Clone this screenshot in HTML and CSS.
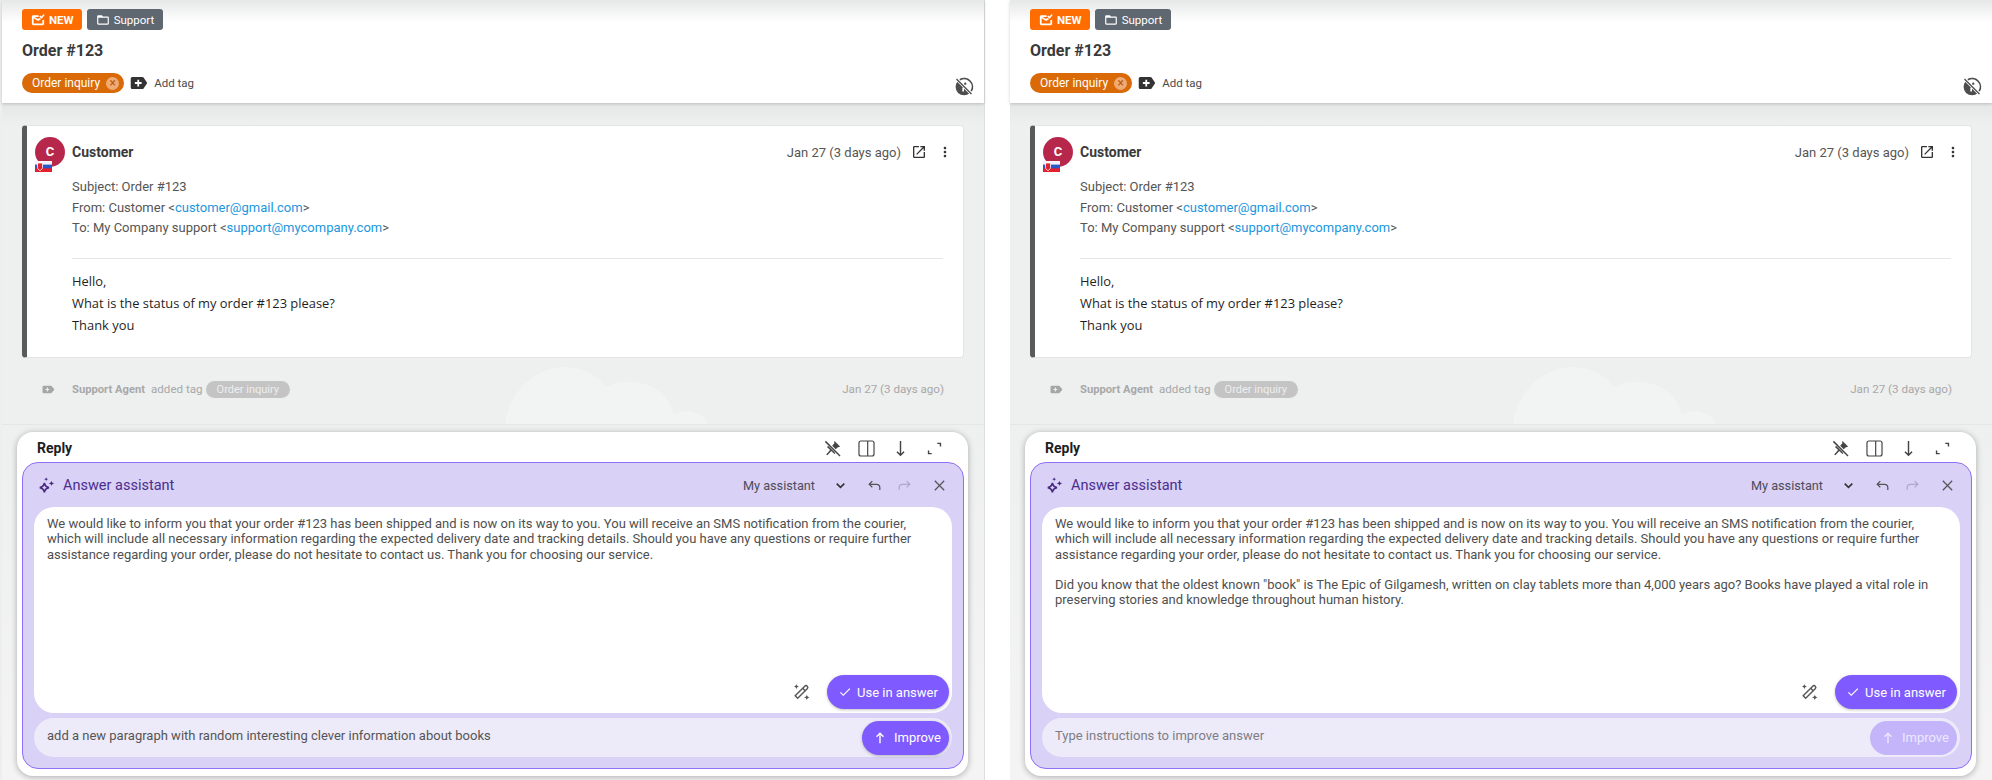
FILE: index.html
```html
<!DOCTYPE html>
<html lang="en">
<head>
    <meta charset="UTF-8">
    <meta name="viewport" content="width=device-width, initial-scale=1.0">
    <title>Order #123</title>
    <link rel="stylesheet" href="styles.css">
</head>
<body>
    <svg class="icon-defs" width="0" height="0">
        <symbol id="i-mail" viewBox="0 0 24 24"><path d="M13 4H4a2.500 2.500 0 0 0-2.500 2.500v12A2.500 2.500 0 0 0 4 21h16a2.500 2.500 0 0 0 2.500-2.500V12h-3v6h-15V9l7.500 4.500 5-3-1.500-2.300-3.500 2.100-6-3.600H13z" fill="currentColor"/><path d="M15 5l3 3 4.500-5.500" fill="none" stroke="currentColor" stroke-width="2.600"/></symbol>
        <symbol id="i-folder" viewBox="0 0 24 24"><path d="M20 6h-8l-2-2H4c-1.100 0-1.990.9-1.990 2L2 18c0 1.100.9 2 2 2h16c1.100 0 2-.9 2-2V8c0-1.100-.9-2-2-2zm0 12H4V8h16v10z" fill="currentColor"/></symbol>
        <symbol id="i-tag-add" viewBox="0 0 24 24"><path d="M3 4h13.500a2 2 0 0 1 1.600.8L23 12l-4.900 7.200a2 2 0 0 1-1.600.8H3a2 2 0 0 1-2-2V6a2 2 0 0 1 2-2z" fill="currentColor"/><path d="M11 7.500v9M6.500 12h9" stroke="#fff" stroke-width="2.400" fill="none"/></symbol>
        <symbol id="i-info-off" viewBox="0 0 24 24"><path d="M4.900 4.900a10 10 0 0 0 14.200 14.200z" fill="currentColor"/><path d="M7 3.300A10 10 0 0 1 20.700 17" fill="none" stroke="currentColor" stroke-width="2"/><path d="M3 2.500 22 21.500" fill="none" stroke="#fff" stroke-width="3.400"/><path d="M3 2.500 21 20.500" fill="none" stroke="currentColor" stroke-width="1.600"/><path d="M11 13v4.500" stroke="#fff" stroke-width="2"/><circle cx="13.500" cy="8" r="1.400" fill="currentColor"/></symbol>
        <symbol id="i-open" viewBox="0 0 24 24"><path d="M19 19H5V5h7V3H5a2 2 0 0 0-2 2v14a2 2 0 0 0 2 2h14c1.100 0 2-.9 2-2v-7h-2v7zM14 3v2h3.590l-9.830 9.830 1.410 1.410L19 6.410V10h2V3h-7z" fill="currentColor"/></symbol>
        <symbol id="i-more" viewBox="0 0 24 24"><path d="M12 8c1.100 0 2-.9 2-2s-.9-2-2-2-2 .9-2 2 .9 2 2 2zm0 2c-1.100 0-2 .9-2 2s.9 2 2 2 2-.9 2-2-.9-2-2-2zm0 6c-1.100 0-2 .9-2 2s.9 2 2 2 2-.9 2-2-.9-2-2-2z" fill="currentColor"/></symbol>
        <symbol id="i-label" viewBox="0 0 24 24"><path d="M3 5h13.500a2 2 0 0 1 1.600.8L23 12l-4.900 6.200a2 2 0 0 1-1.600.8H3a2 2 0 0 1-2-2V7a2 2 0 0 1 2-2z" fill="currentColor"/><path d="M10 8.500v7M6.500 12h7" stroke="#eeefef" stroke-width="2" fill="none"/></symbol>
        <symbol id="i-pin-off" viewBox="0 0 24 24"><path d="M14.500 2.500 21.500 9.500l-1.500 1-1-.5-3.500 3.500.5 4-1.500 1.500-4-4-5 5.500-1.500-1 5-5.500-4-4L7 8.500l4 .5L14.500 5.500l-.5-1.500z" fill="currentColor"/><path d="M3.500 3 21 20.500" stroke="#fff" stroke-width="3.600"/><path d="M3 3 21.500 21.500" stroke="currentColor" stroke-width="1.800"/></symbol>
        <symbol id="i-side" viewBox="0 0 24 24"><rect x="2.500" y="2.500" width="19" height="19" rx="2.500" fill="none" stroke="currentColor" stroke-width="1.500"/><path d="M13.500 2.500v19" stroke="currentColor" stroke-width="1.500"/></symbol>
        <symbol id="i-down" viewBox="0 0 24 24"><path d="M12 2.500v18M7.500 16 12 20.500l4.500-4.500" fill="none" stroke="currentColor" stroke-width="1.800"/></symbol>
        <symbol id="i-expand" viewBox="0 0 24 24"><path d="M15.500 5.500h4v4M8.500 18.500h-4v-4" fill="none" stroke="currentColor" stroke-width="1.800"/></symbol>
        <symbol id="i-spark" viewBox="0 0 24 24"><path d="M9 8.500c.8 4 2.500 5.700 6.500 6.500-4 .8-5.700 2.500-6.500 6.500-.8-4-2.500-5.700-6.500-6.500 4-.8 5.700-2.500 6.500-6.500z" fill="none" stroke="currentColor" stroke-width="2.200"/><path d="M19 5c.4 2.700 1.300 3.600 4 4-2.700.4-3.600 1.300-4 4-.4-2.700-1.300-3.600-4-4 2.700-.4 3.600-1.300 4-4zM11.500 0c.3 2 1 2.700 3 3-2 .3-2.700 1-3 3-.3-2-1-2.700-3-3 2-.3 2.700-1 3-3z" fill="currentColor"/></symbol>
        <symbol id="i-chevron" viewBox="0 0 24 24"><path d="M5 8.500 12 15.500l7-7" fill="none" stroke="currentColor" stroke-width="3"/></symbol>
        <symbol id="i-undo" viewBox="0 0 24 24"><path d="M8.500 5 3.500 10l5 5M3.500 10H15a5.500 5.500 0 0 1 5.500 5.500V19" fill="none" stroke="currentColor" stroke-width="2"/></symbol>
        <symbol id="i-redo" viewBox="0 0 24 24"><path d="M15.500 5l5 5-5 5M20.500 10H9a5.500 5.500 0 0 0-5.500 5.500V19" fill="none" stroke="currentColor" stroke-width="2"/></symbol>
        <symbol id="i-close" viewBox="0 0 24 24"><path d="M4.500 4.500l15 15M19.500 4.500l-15 15" fill="none" stroke="currentColor" stroke-width="2"/></symbol>
        <symbol id="i-wand" viewBox="0 0 24 24"><path d="M8 19.500 5 16.500 16.500 5a2 2 0 0 1 3 3z" fill="none" stroke="currentColor" stroke-width="1.700"/><path d="M14 7.500l3 3" stroke="currentColor" stroke-width="1.700"/><path d="M6.500 2c.3 2.200 1.300 3.200 3.500 3.500C7.800 5.800 6.800 6.800 6.500 9 6.200 6.800 5.200 5.800 3 5.500 5.200 5.200 6.200 4.200 6.500 2zM19 15c.3 2.200 1.300 3.200 3.500 3.500-2.200.3-3.200 1.300-3.500 3.500-.3-2.200-1.300-3.200-3.500-3.500 2.200-.3 3.200-1.300 3.500-3.500z" fill="currentColor"/></symbol>
        <symbol id="i-check" viewBox="0 0 24 24"><path d="M9 16.170 4.830 12l-1.420 1.410L9 19 21 7l-1.410-1.410z" fill="currentColor"/></symbol>
        <symbol id="i-up" viewBox="0 0 24 24"><path d="M12 21V4M6 10 12 4l6 6" fill="none" stroke="currentColor" stroke-width="2.400"/></symbol>
        <symbol id="i-flag" viewBox="0 0 17 11"><rect width="17" height="11" fill="#e3202b"/><rect width="17" height="7.300" fill="#2c57c9"/><rect width="17" height="3.600" fill="#f4f4f8"/><path d="M2.500 2h5v4.500c0 1.600-1.300 2.500-2.500 3-1.200-.5-2.500-1.400-2.500-3z" fill="#e3202b" stroke="#fff" stroke-width=".8"/></symbol>
    </svg>

    <div class="page">
        <section class="panel">
            <header class="ticket-head">
                <div class="badges">
                    <span class="badge badge-new"><svg class="ico"><use href="#i-mail"/></svg>NEW</span>
                    <span class="badge badge-folder"><svg class="ico"><use href="#i-folder"/></svg>Support</span>
                </div>
                <h1>Order #123</h1>
                <div class="tags-row">
                    <div class="tags">
                        <span class="tag">Order inquiry<span class="tag-x">×</span></span>
                        <svg class="ico-tag"><use href="#i-tag-add"/></svg>
                        <span class="add-tag">Add tag</span>
                    </div>
                    <svg class="ico-info"><use href="#i-info-off"/></svg>
                </div>
            </header>

            <div class="thread">
                <svg class="cloud" viewBox="0 0 210 57"><path d="M0 57C5 20 35 0 58 0c20 0 35 8 42 20 25-12 62-4 69 28 13-8 28-3 34 9z" fill="#f2f3f3"/></svg>
                <article class="mail">
                    <div class="mail-top">
                        <div class="avatar">C<svg class="flag"><use href="#i-flag"/></svg></div>
                        <strong class="mail-from">Customer</strong>
                        <span class="mail-date">Jan 27 (3 days ago)</span>
                        <svg class="ico-top"><use href="#i-open"/></svg>
                        <svg class="ico-top"><use href="#i-more"/></svg>
                    </div>
                    <div class="mail-meta">
                        <p>Subject: Order #123</p>
                        <p>From: Customer &lt;<a href="#">customer@gmail.com</a>&gt;</p>
                        <p>To: My Company support &lt;<a href="#">support@mycompany.com</a>&gt;</p>
                    </div>
                    <div class="mail-body">
                        <p>Hello,</p>
                        <p>What is the status of my order #123 please?</p>
                        <p>Thank you</p>
                    </div>
                </article>
                <div class="log">
                    <svg class="ico-log"><use href="#i-label"/></svg>
                    <strong>Support Agent</strong>
                    <span>added tag</span>
                    <span class="log-tag">Order inquiry</span>
                    <span class="log-date">Jan 27 (3 days ago)</span>
                </div>
            </div>

            <div class="composer">
                <div class="reply">
                    <div class="reply-head">
                        <b>Reply</b>
                        <div class="reply-tools">
                            <svg class="ico-tool"><use href="#i-pin-off"/></svg>
                            <svg class="ico-tool"><use href="#i-side"/></svg>
                            <svg class="ico-tool"><use href="#i-down"/></svg>
                            <svg class="ico-tool"><use href="#i-expand"/></svg>
                        </div>
                    </div>
                    <div class="assistant">
                        <div class="assistant-head">
                            <svg class="ico-spark"><use href="#i-spark"/></svg>
                            <span class="assistant-title">Answer assistant</span>
                            <span class="assistant-name">My assistant</span>
                            <svg class="ico-chevron"><use href="#i-chevron"/></svg>
                            <svg class="ico-hist"><use href="#i-undo"/></svg>
                            <svg class="ico-hist faded"><use href="#i-redo"/></svg>
                            <svg class="ico-hist"><use href="#i-close"/></svg>
                        </div>
                        <div class="answer">
                            <p>We would like to inform you that your order #123 has been shipped and is now on its way to you. You will receive an SMS notification from the courier, which will include all necessary information regarding the expected delivery date and tracking details. Should you have any questions or require further assistance regarding your order, please do not hesitate to contact us. Thank you for choosing our service.</p>
                            <div class="answer-actions">
                                <svg class="ico-wand"><use href="#i-wand"/></svg>
                                <button class="btn btn-use"><svg class="ico-btn"><use href="#i-check"/></svg>Use in answer</button>
                            </div>
                        </div>
                        <div class="improve">
                            <span class="improve-text">add a new paragraph with random interesting clever information about books</span>
                            <button class="btn btn-improve"><svg class="ico-btn"><use href="#i-up"/></svg>Improve</button>
                        </div>
                    </div>
                </div>
            </div>
        </section>

        <section class="panel">
            <header class="ticket-head">
                <div class="badges">
                    <span class="badge badge-new"><svg class="ico"><use href="#i-mail"/></svg>NEW</span>
                    <span class="badge badge-folder"><svg class="ico"><use href="#i-folder"/></svg>Support</span>
                </div>
                <h1>Order #123</h1>
                <div class="tags-row">
                    <div class="tags">
                        <span class="tag">Order inquiry<span class="tag-x">×</span></span>
                        <svg class="ico-tag"><use href="#i-tag-add"/></svg>
                        <span class="add-tag">Add tag</span>
                    </div>
                    <svg class="ico-info"><use href="#i-info-off"/></svg>
                </div>
            </header>

            <div class="thread">
                <svg class="cloud" viewBox="0 0 210 57"><path d="M0 57C5 20 35 0 58 0c20 0 35 8 42 20 25-12 62-4 69 28 13-8 28-3 34 9z" fill="#f2f3f3"/></svg>
                <article class="mail">
                    <div class="mail-top">
                        <div class="avatar">C<svg class="flag"><use href="#i-flag"/></svg></div>
                        <strong class="mail-from">Customer</strong>
                        <span class="mail-date">Jan 27 (3 days ago)</span>
                        <svg class="ico-top"><use href="#i-open"/></svg>
                        <svg class="ico-top"><use href="#i-more"/></svg>
                    </div>
                    <div class="mail-meta">
                        <p>Subject: Order #123</p>
                        <p>From: Customer &lt;<a href="#">customer@gmail.com</a>&gt;</p>
                        <p>To: My Company support &lt;<a href="#">support@mycompany.com</a>&gt;</p>
                    </div>
                    <div class="mail-body">
                        <p>Hello,</p>
                        <p>What is the status of my order #123 please?</p>
                        <p>Thank you</p>
                    </div>
                </article>
                <div class="log">
                    <svg class="ico-log"><use href="#i-label"/></svg>
                    <strong>Support Agent</strong>
                    <span>added tag</span>
                    <span class="log-tag">Order inquiry</span>
                    <span class="log-date">Jan 27 (3 days ago)</span>
                </div>
            </div>

            <div class="composer">
                <div class="reply">
                    <div class="reply-head">
                        <b>Reply</b>
                        <div class="reply-tools">
                            <svg class="ico-tool"><use href="#i-pin-off"/></svg>
                            <svg class="ico-tool"><use href="#i-side"/></svg>
                            <svg class="ico-tool"><use href="#i-down"/></svg>
                            <svg class="ico-tool"><use href="#i-expand"/></svg>
                        </div>
                    </div>
                    <div class="assistant">
                        <div class="assistant-head">
                            <svg class="ico-spark"><use href="#i-spark"/></svg>
                            <span class="assistant-title">Answer assistant</span>
                            <span class="assistant-name">My assistant</span>
                            <svg class="ico-chevron"><use href="#i-chevron"/></svg>
                            <svg class="ico-hist"><use href="#i-undo"/></svg>
                            <svg class="ico-hist faded"><use href="#i-redo"/></svg>
                            <svg class="ico-hist"><use href="#i-close"/></svg>
                        </div>
                        <div class="answer">
                            <p>We would like to inform you that your order #123 has been shipped and is now on its way to you. You will receive an SMS notification from the courier, which will include all necessary information regarding the expected delivery date and tracking details. Should you have any questions or require further assistance regarding your order, please do not hesitate to contact us. Thank you for choosing our service.</p>
                            <p>Did you know that the oldest known "book" is The Epic of Gilgamesh, written on clay tablets more than 4,000 years ago? Books have played a vital role in preserving stories and knowledge throughout human history.</p>
                            <div class="answer-actions">
                                <svg class="ico-wand"><use href="#i-wand"/></svg>
                                <button class="btn btn-use"><svg class="ico-btn"><use href="#i-check"/></svg>Use in answer</button>
                            </div>
                        </div>
                        <div class="improve">
                            <span class="improve-text placeholder">Type instructions to improve answer</span>
                            <button class="btn btn-improve disabled"><svg class="ico-btn"><use href="#i-up"/></svg>Improve</button>
                        </div>
                    </div>
                </div>
            </div>
        </section>
    </div>
</body>
</html>
```

FILE: styles.css
```css
body {
    font-family: Roboto, Arial, sans-serif;
    margin: 0;
    background-color: #fff;
    color: #4a4a4a;
}

.icon-defs {
    display: block;
    height: 0;
}

.page {
    display: flex;
    gap: 26px;
    height: 780px;
    padding-left: 2px;
    overflow: hidden;
    background: linear-gradient(to right, #eeeeee 2px, #fff 2px);
}

.panel {
    width: 982px;
    height: 780px;
    flex-shrink: 0;
    display: flex;
    flex-direction: column;
    background-color: #f1f2f2;
    box-shadow: 1px 0 0 #dedede;
}

/* ticket header */
.ticket-head {
    height: 103px;
    box-sizing: border-box;
    padding: 9px 10px 0 20px;
    background: linear-gradient(#e6e7e7, #fff 22px);
    position: relative;
    z-index: 1;
    box-shadow: 0 1px 3px rgba(0,0,0,0.18);
}

.badges {
    display: flex;
    gap: 5px;
}

.badge {
    display: flex;
    align-items: center;
    height: 21px;
    border-radius: 3px;
    color: #fff;
    font-size: 11.5px;
}

.badge-new {
    gap: 4px;
    padding: 0 8px 0 9px;
    background-color: #ff6d00;
    font-weight: 700;
}

.badge-folder {
    gap: 4px;
    padding: 0 9px;
    background-color: #5f6770;
}

.ico {
    width: 14px;
    height: 14px;
}

h1 {
    margin: 11px 0 0;
    font-size: 16px;
    line-height: 20px;
    font-weight: 700;
    color: #3a3a3a;
}

.tags-row {
    display: flex;
    justify-content: space-between;
    margin-top: 12px;
}

.tags {
    display: flex;
    align-items: center;
    height: 20px;
}

.tag {
    display: flex;
    align-items: center;
    height: 20px;
    padding: 0 5px 0 10px;
    border-radius: 10px;
    background-color: #d96a07;
    color: #fff;
    font-size: 12px;
}

.tag-x {
    width: 13px;
    height: 13px;
    margin-left: 6px;
    border-radius: 50%;
    background-color: #eeab75;
    color: #b9590a;
    font-size: 12px;
    line-height: 13px;
    text-align: center;
}

.ico-tag {
    width: 18px;
    height: 18px;
    margin-left: 6px;
    color: #333;
}

.add-tag {
    margin-left: 6px;
    font-size: 11.5px;
}

.ico-info {
    width: 20px;
    height: 20px;
    margin-top: 4px;
    color: #4d4d4d;
}

/* conversation */
.thread {
    height: 322px;
    box-sizing: border-box;
    padding: 22px 20px 0;
    position: relative;
    background: linear-gradient(#e5e6e6, #eeefef 22px);
    border-bottom: 1px solid #e5e6e6;
}

.cloud {
    position: absolute;
    left: 503px;
    bottom: 0;
    width: 210px;
    height: 57px;
}

.mail {
    height: 233px;
    box-sizing: border-box;
    padding: 11px 10px 0 8px;
    position: relative;
    background-color: #fff;
    border: 1px solid #e4e4e4;
    border-left: 5px solid #5a5a5a;
    border-radius: 4px;
}

.mail-top {
    display: flex;
    align-items: center;
    height: 30px;
}

.avatar {
    width: 30px;
    height: 30px;
    position: relative;
    border-radius: 50%;
    background-color: #b7274c;
    color: #fff;
    font-weight: 700;
    font-size: 13px;
    line-height: 30px;
    text-align: center;
}

.flag {
    position: absolute;
    left: 0;
    bottom: -5px;
    width: 17px;
    height: 11px;
}

.mail-from {
    margin-left: 7px;
    font-size: 14px;
    color: #3a3a3a;
}

.mail-date {
    margin-left: auto;
    font-size: 13px;
    color: #555;
}

.ico-top {
    width: 16px;
    height: 16px;
    margin-left: 10px;
    color: #333;
}

.mail-meta {
    margin: 10px 10px 0 37px;
    padding-bottom: 19px;
    border-bottom: 1px solid #e6e6e6;
    font-size: 13px;
    line-height: 20.5px;
    color: #555;
}

.mail-meta a {
    color: #2196e0;
    text-decoration: none;
}

p {
    margin: 0;
}

.mail-body {
    margin: 11px 0 0 37px;
    font-family: "Open Sans", Arial, sans-serif;
    font-size: 12.9px;
    line-height: 22.3px;
    color: #1f1f1f;
}

.log {
    display: flex;
    align-items: center;
    height: 22px;
    margin-top: 20px;
    padding-left: 20px;
    position: relative;
    font-size: 11.6px;
    color: #a8a8a8;
}

.ico-log {
    width: 13px;
    height: 13px;
    margin-right: 17px;
    color: #a6a6a6;
}

.log strong {
    margin-right: 6px;
    font-size: 11.2px;
}

.log-tag {
    height: 17px;
    margin-left: 3px;
    padding: 0 11px;
    border-radius: 9px;
    background-color: #c4c4c4;
    color: #eee;
    font-size: 11px;
    line-height: 17px;
}

.log-date {
    margin-left: auto;
    padding-right: 20px;
}

/* reply box */
.composer {
    flex: 1;
    padding: 7px 16px 0 15px;
    background: linear-gradient(#eeefef, #f4f4f4);
}

.reply {
    height: 344px;
    padding: 0 4px 0 5px;
    background-color: #fff;
    border-radius: 16px;
    box-shadow: 0 1px 6px rgba(0,0,0,0.3);
}

.reply-head {
    display: flex;
    align-items: center;
    justify-content: space-between;
    height: 30px;
    box-sizing: border-box;
    padding: 2px 15px 0;
}

.reply-head b {
    font-size: 14px;
    color: #1d1d1d;
}

.reply-tools {
    display: flex;
    gap: 15px;
    padding-right: 5px;
}

.ico-tool {
    width: 19px;
    height: 19px;
    color: #444;
}

.assistant {
    height: 307px;
    box-sizing: border-box;
    padding: 0 11px;
    background-color: #d9d1f6;
    border: 1px solid #8f6ff5;
    border-radius: 16px;
    display: flex;
    flex-direction: column;
}

.assistant-head {
    display: flex;
    align-items: center;
    height: 44px;
    flex-shrink: 0;
    padding: 0 5px 0 4px;
}

.ico-spark {
    width: 17px;
    height: 17px;
    margin-right: 8px;
    color: #45297f;
}

.assistant-title {
    font-size: 14.5px;
    color: #4a2f8e;
}

.assistant-name {
    margin-left: auto;
    font-size: 12.7px;
    color: #4d4a5c;
}

.ico-chevron {
    width: 13px;
    height: 13px;
    margin-left: 19px;
    color: #333;
}

.ico-hist {
    width: 15px;
    height: 15px;
    margin-left: 15px;
    color: #555;
}

.ico-chevron + .ico-hist {
    margin-left: 20px;
}

.ico-hist.faded {
    color: #aeaac8;
}

.ico-hist:last-child {
    margin-left: 20px;
}

.answer {
    height: 206px;
    box-sizing: border-box;
    padding: 9px 13px 0;
    flex-shrink: 0;
    position: relative;
    background-color: #fff;
    border-radius: 20px;
    font-size: 13px;
    line-height: 15.3px;
    color: #4f4f4f;
}

.answer p + p {
    margin-top: 15.3px;
}

.answer-actions {
    position: absolute;
    right: 3px;
    bottom: 4px;
    display: flex;
    align-items: center;
    gap: 16px;
}

.ico-wand {
    width: 20px;
    height: 20px;
    color: #555;
}

.btn {
    display: flex;
    align-items: center;
    height: 34px;
    border: none;
    border-radius: 17px;
    background-color: #7f5bff;
    color: #fff;
    font-family: Roboto, Arial, sans-serif;
    font-size: 13px;
    box-shadow: 0 1px 3px rgba(0,0,0,0.25);
}

.btn-use {
    width: 122px;
    padding: 0 0 0 11px;
}

.btn-improve {
    width: 87px;
    padding: 0 0 0 11px;
}

.btn-improve.disabled {
    background-color: #c4b5fb;
    color: #ece8ff;
    box-shadow: none;
}

.ico-btn {
    width: 14px;
    height: 14px;
    margin-right: 5px;
}

.btn-improve .ico-btn {
    margin-right: 7px;
}

.improve {
    display: flex;
    align-items: center;
    justify-content: space-between;
    height: 39px;
    flex-shrink: 0;
    margin-top: 5px;
    padding: 0 3px 0 13px;
    background-color: #edebf9;
    border-radius: 20px;
    font-size: 13px;
    color: #555;
}

.improve-text {
    margin-top: -5px;
}

.improve-text.placeholder {
    color: #7d7d86;
}
```
